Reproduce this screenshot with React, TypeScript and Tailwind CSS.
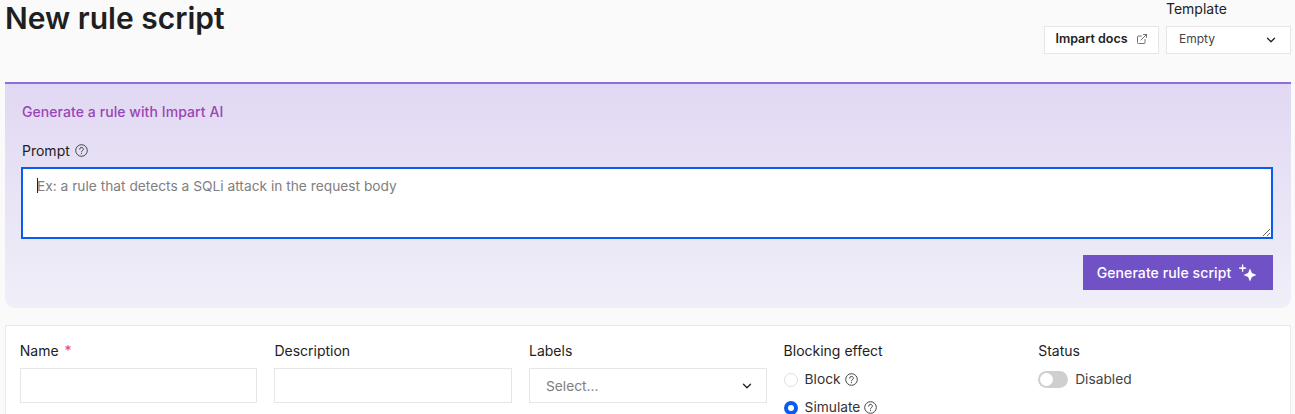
import { ChevronDown, ExternalLink } from 'lucide-react';

function HelpIcon() {
  return (
    <svg width="13" height="13" viewBox="0 0 13 13" fill="none" className="text-[#444]" stroke="currentColor">
      <circle cx="6.5" cy="6.5" r="5.8" strokeWidth="1" />
      <path d="M4.7 5.2a1.8 1.8 0 1 1 2.7 1.5c-.6.4-.9.7-.9 1.2" strokeWidth="1" strokeLinecap="round" />
      <circle cx="6.5" cy="9.6" r="0.6" fill="currentColor" stroke="none" />
    </svg>
  );
}

function SparklesIcon() {
  return (
    <svg width="18" height="18" viewBox="0 0 18 18" fill="white">
      <path d="M3 0.5 H4.2 L4.4 3.3 L7.2 3.5 V4.7 L4.4 4.9 L4.2 7.7 H3 L2.8 4.9 L0 4.7 V3.5 L2.8 3.3 Z" />
      <path d="M11 4.5 L12.9 9.1 L17.5 11 L12.9 12.9 L11 17.5 L9.1 12.9 L4.5 11 L9.1 9.1 Z" />
    </svg>
  );
}

function FieldLabel({ children }: { children: React.ReactNode }) {
  return <div className="text-[14px] leading-[17px] font-normal text-[#222]">{children}</div>;
}

export default function App() {
  return (
    <div className="h-[414px] w-[1295px] overflow-hidden bg-[#fafafa] pl-[5px] pr-[4px] font-['Inter',sans-serif] text-[#222]">
      <header className="flex h-[82px] items-start justify-between">
        <h1 className="mt-[-1px] text-[30px] leading-[38px] font-semibold text-[#1f1f1f]">New rule script</h1>
        <div className="flex items-end gap-[7px]">
          <button className="flex h-[28px] w-[115px] items-center justify-center gap-[8px] border border-[#e6e6e6] bg-white pb-[2px] text-[12.5px] font-semibold text-[#222]">
            Impart docs
            <ExternalLink size={12} strokeWidth={1.5} className="text-[#444]" />
          </button>
          <div className="flex flex-col gap-[9px]">
            <div className="text-[14px] leading-[17px] text-[#222]">Template</div>
            <div className="flex h-[28px] w-[125px] items-center justify-between border border-[#e6e6e6] bg-white pl-[12px] pr-[12px] text-[12px] text-[#444]">
              <span className="pb-[2px]">Empty</span>
              <ChevronDown size={14} strokeWidth={2.25} className="text-[#222]" />
            </div>
          </div>
        </div>
      </header>

      <section className="h-[226px] rounded-b-[10px] border-t-2 border-[#8f6cdc] bg-linear-to-b from-[#e1d8f3] to-[#f0eff8] pl-[16px] pr-[18px] pt-[20px]">
        <div className="pl-[1px] text-[14px] leading-[16px] font-medium tracking-[0.07px] text-[#9a45b5]">Generate a rule with Impart AI</div>
        <div className="mt-[22px] flex items-center gap-[5px] pl-[1px]">
          <span className="text-[14px] leading-[17px] text-[#222]">Prompt</span>
          <HelpIcon />
        </div>
        <div className="relative mt-[8px]">
          <textarea
            className="block h-[72px] w-full border-2 border-[#0a5cf0] bg-white px-[14px] py-[8px] text-[13.75px] leading-[18px] text-[#333] outline-none placeholder:text-[#808080]"
            placeholder="Ex: a rule that detects a SQLi attack in the request body"
          />
          <span className="absolute left-[16px] top-[11px] h-[15px] w-px bg-[#222]" />
        </div>
        <div className="mt-[16px] flex justify-end">
          <button className="flex h-[35px] w-[190px] items-center justify-center gap-[8px] bg-[#7052c6] pr-[2px] text-[14px] font-medium tracking-[0.1px] text-white">
            <span className="pb-[1px]">Generate rule script</span>
            <SparklesIcon />
          </button>
        </div>
      </section>

      <section className="mt-[17px] h-[120px] border border-[#eaeaea] bg-white pl-[13.8px] pt-[16px]">
        <div className="grid grid-cols-[repeat(5,237.6px)] gap-x-[17px]">
          <div>
            <FieldLabel>
              Name <span className="ml-[2px] text-[#f0405a]">*</span>
            </FieldLabel>
            <div className="mt-[9px] h-[35px] border border-[#e6e6e6] bg-white" />
          </div>
          <div>
            <FieldLabel>Description</FieldLabel>
            <div className="mt-[9px] h-[35px] border border-[#e6e6e6] bg-white" />
          </div>
          <div>
            <FieldLabel>Labels</FieldLabel>
            <div className="mt-[9px] flex h-[35px] items-center justify-between border border-[#e6e6e6] bg-white pl-[16px] pr-[12px] text-[13.75px] text-[#808080]">
              <span className="pt-[1px]">Select...</span>
              <ChevronDown size={14} strokeWidth={2.25} className="text-[#222]" />
            </div>
          </div>
          <div>
            <FieldLabel>Blocking effect</FieldLabel>
            <div className="mt-[12px] flex items-center text-[13.75px] leading-[17px] text-[#333]">
              <span className="mr-[7px] h-[14px] w-[14px] rounded-full border border-[#e0e0e0] bg-white" />
              Block
              <span className="ml-[4px] flex"><HelpIcon /></span>
            </div>
            <div className="mt-[11px] flex items-center text-[13.75px] leading-[17px] text-[#333]">
              <span className="mr-[7px] h-[14px] w-[14px] rounded-full border-[4px] border-[#0a5cf0] bg-white" />
              Simulate
              <span className="ml-[4px] flex"><HelpIcon /></span>
            </div>
          </div>
          <div>
            <FieldLabel>Status</FieldLabel>
            <div className="mt-[12px] flex items-center gap-[7px] text-[13.75px] leading-[17px] text-[#444]">
              <span className="flex h-[17px] w-[30px] items-center rounded-full bg-[#cfcfcf] pl-[2px]">
                <span className="h-[13px] w-[13px] rounded-full bg-white" />
              </span>
              Disabled
            </div>
          </div>
        </div>
      </section>
    </div>
  );
}
